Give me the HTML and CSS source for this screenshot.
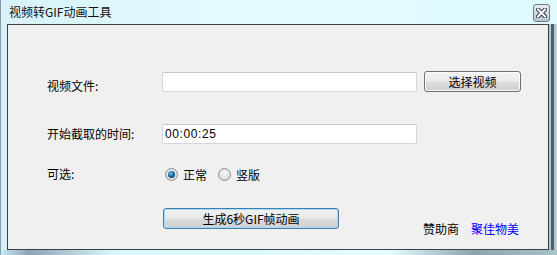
FILE: index.html
```html
<!DOCTYPE html>
<html lang="zh-CN">
<head>
<meta charset="utf-8">
<title>视频转GIF动画工具</title>
<link rel="stylesheet" href="styles.css">
</head>
<body>
<div class="window">
  <div class="titlebar">
    <span class="title">视频转GIF动画工具</span>
    <span class="close-btn">
      <svg width="11" height="10" viewBox="0 0 11 10">
        <path d="M2 1.5 L9 8.5 M9 1.5 L2 8.5" stroke="#2f3944" stroke-width="4" stroke-linecap="square"/>
        <path d="M2 1.5 L9 8.5 M9 1.5 L2 8.5" stroke="#ffffff" stroke-width="2" stroke-linecap="square"/>
      </svg>
    </span>
  </div>
  <div class="body-row">
    <div class="client">
      <div class="row row-file">
        <span class="label label-low">视频文件:</span>
        <input class="field" type="text" value="">
        <button class="btn">选择视频</button>
      </div>
      <div class="row row-time">
        <span class="label">开始截取的时间:</span>
        <input class="field mono" type="text" value="00:00:25">
      </div>
      <div class="row row-opt">
        <span class="label">可选:</span>
        <div class="radios">
          <span class="radio-item"><span class="radio checked"></span>正常</span>
          <span class="radio-item"><span class="radio"></span>竖版</span>
        </div>
      </div>
      <div class="row row-go">
        <span></span>
        <button class="btn btn-focus">生成6秒GIF帧动画</button>
        <div class="sponsor"><span>赞助商</span><span class="sponsor-link">聚佳物美</span></div>
      </div>
    </div>
    <div class="frame-right"></div>
  </div>
  <div class="frame-bottom"></div>
</div>
</body>
</html>
```
FILE: styles.css
```css
html, body {
  margin: 0;
  padding: 0;
}
body {
  width: 557px;
  height: 255px;
  overflow: hidden;
  font-family: "Noto Sans CJK SC", "Liberation Sans", sans-serif;
  font-size: 12px;
  color: #000;
}
.window {
  width: 557px;
  height: 255px;
  box-sizing: border-box;
  border-left: 1px solid #8e9ca8;
  background: linear-gradient(90deg, #d6f2f8 0%, #e3fbfe 40%, #defafd 100%);
  display: flex;
  flex-direction: column;
}
.titlebar {
  height: 24px;
  flex: none;
  display: flex;
  justify-content: space-between;
  align-items: flex-start;
  padding: 0 7px 0 8px;
}
.title {
  margin-top: 4px;
  line-height: 16px;
  font-size: 12px;
  color: #111;
}
.close-btn {
  margin-top: 4px;
  width: 17px;
  height: 18px;
  box-sizing: border-box;
  border: 1px solid #6f7c88;
  border-radius: 3px;
  background: linear-gradient(#e6eef4 0%, #cfd9e2 50%, #b9c6d2 100%);
  display: flex;
  align-items: center;
  justify-content: center;
}
.body-row {
  display: flex;
  height: 226px;
  flex: none;
  padding-left: 6px;
}
.client {
  width: 542px;
  height: 226px;
  box-sizing: border-box;
  border: 1px solid #3b4147;
  background: #f0f0f0;
  padding: 46px 0 0 39px;
  display: flex;
  flex-direction: column;
}
.frame-right {
  width: 8px;
  background: linear-gradient(90deg, #b4c4cc 0px, #b4c4cc 2px, #51616c 2px, #51616c 5px, #a9bcc4 5px, #c8d8de 8px);
}
.frame-bottom {
  flex: 1;
  background: linear-gradient(90deg, #c2ecf3 0%, #8fa2b4 5%, #d9f7fb 20%, #e4fcfe 70%, #8ea3b0 85%, #a8c2c8 100%);
}
.row {
  display: grid;
  grid-template-columns: 108px 255px 97px;
  column-gap: 7px;
  align-items: center;
}
.row-file { height: 21px; }
.row-time { height: 21px; margin-top: 31px; }
.row-opt { height: 20px; margin-top: 20px; }
.row-go { height: 21px; margin-top: 24px; }
.label {
  line-height: 14px;
  white-space: nowrap;
}
.label-low {
  align-self: end;
  margin-bottom: -1px;
}
.field {
  width: 255px;
  height: 20px;
  box-sizing: border-box;
  margin: 0;
  border: 1px solid #d2d6dc;
  border-top-color: #c4c8ce;
  border-radius: 2px;
  background: #fff;
  padding: 0 2px;
  font-family: "Noto Sans CJK SC", "Liberation Sans", sans-serif;
  font-size: 12px;
  outline: none;
}
.row-time .field {
  margin-top: 1px;
}
.mono {
  font-family: "Liberation Sans", sans-serif;
  letter-spacing: 0.6px;
}
.btn {
  height: 21px;
  margin: 0;
  padding: 0;
  box-sizing: border-box;
  border: 1px solid #707070;
  border-radius: 3px;
  background: linear-gradient(#f3f3f3 0%, #ebebeb 48%, #dddddd 52%, #cfcfcf 100%);
  box-shadow: inset 0 0 0 1px #fbfbfb;
  font-family: "Noto Sans CJK SC", "Liberation Sans", sans-serif;
  font-size: 12px;
  color: #000;
  line-height: 18px;
}
.row-file .btn {
  width: 97px;
}
.btn-focus {
  width: 176px;
  margin-left: 1px;
  border-color: #3c7fb1;
  box-shadow: inset 0 0 0 1px #a6dcf6;
  background: linear-gradient(#f1f1f1 0%, #e9e9e9 48%, #dcdcdc 52%, #d0d0d0 100%);
}
.radios {
  display: flex;
  align-items: center;
  gap: 11px;
  padding-left: 3px;
}
.radio-item {
  display: flex;
  align-items: center;
  gap: 5px;
  white-space: nowrap;
}
.radio {
  width: 13px;
  height: 13px;
  box-sizing: border-box;
  border-radius: 50%;
  border: 1px solid #8e8f8f;
  background: radial-gradient(circle at 50% 40%, #f5f5f5 0%, #e2e2e2 55%, #cfcfcf 100%);
  display: flex;
  align-items: center;
  justify-content: center;
}
.radio.checked::after {
  content: "";
  width: 7px;
  height: 7px;
  border-radius: 50%;
  background: radial-gradient(circle at 40% 35%, #6cc0ee 0%, #15629c 50%, #0a3560 100%);
}
.sponsor {
  align-self: end;
  margin-bottom: -8px;
  margin-left: -1px;
  display: flex;
  gap: 12px;
  white-space: nowrap;
}
.sponsor-link {
  color: #0000ff;
}
```
